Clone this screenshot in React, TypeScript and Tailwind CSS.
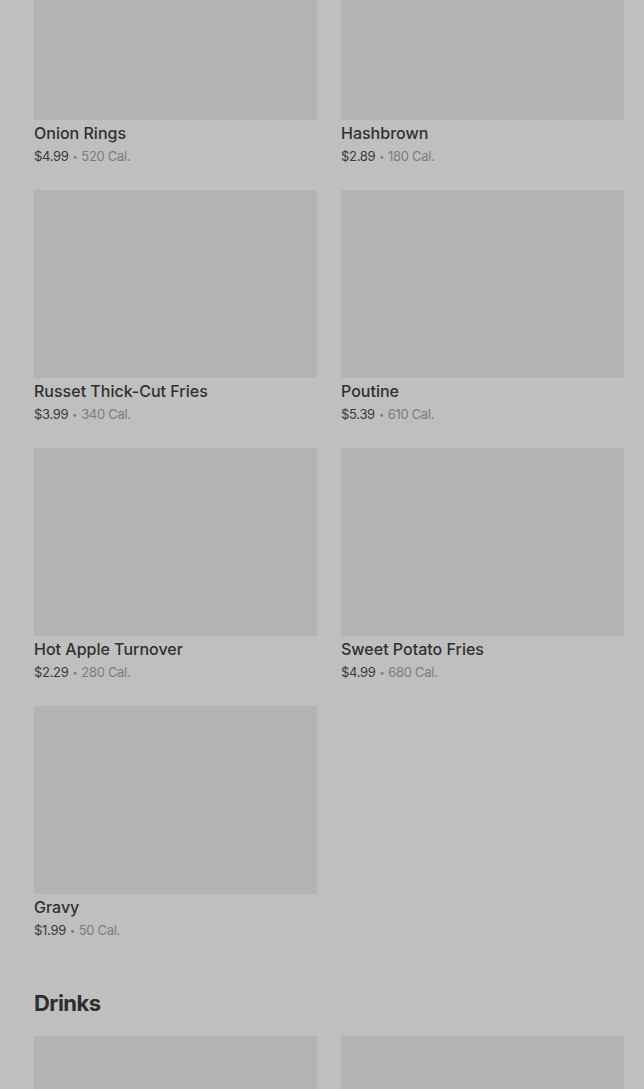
import React from "react";

type Item = { name: string; price: string; cal: string };

const sides: Item[] = [
  { name: "Onion Rings", price: "$4.99", cal: "520 Cal." },
  { name: "Hashbrown", price: "$2.89", cal: "180 Cal." },
  { name: "Russet Thick-Cut Fries", price: "$3.99", cal: "340 Cal." },
  { name: "Poutine", price: "$5.39", cal: "610 Cal." },
  { name: "Hot Apple Turnover", price: "$2.29", cal: "280 Cal." },
  { name: "Sweet Potato Fries", price: "$4.99", cal: "680 Cal." },
  { name: "Gravy", price: "$1.99", cal: "50 Cal." },
];

const MenuCard = ({ item }: { item: Item }) => (
  <div className="flex flex-col">
    <div className="h-[188px] bg-[#b3b3b3]" />
    <p className="pt-px text-[16px] leading-6 font-medium text-[#303030]">{item.name}</p>
    <div className="flex h-[21px] items-center pt-[2px] text-[13px] leading-none tracking-[-0.3px] text-[#3a3a3a]">
      <span>{item.price}</span>
      <span className="mx-[4px] text-[9px] text-[#7c7c7c]">•</span>
      <span className="text-[#7c7c7c]">{item.cal}</span>
    </div>
  </div>
);

const App = () => {
  return (
    <div
      className="min-h-screen overflow-hidden bg-[#bfbfbf] pl-[34px] pr-[20px]"
      style={{ fontFamily: "Inter, 'Noto Sans', sans-serif" }}
    >
      <div className="-mt-[68px] grid grid-cols-2 gap-x-6 gap-y-6">
        {sides.map((item) => (
          <MenuCard key={item.name} item={item} />
        ))}
      </div>

      <h2 className="mt-[49px] mb-[19px] text-[22px] leading-7 font-bold tracking-tight text-[#2e2e2e]">
        Drinks
      </h2>
      <div className="grid grid-cols-2 gap-x-6">
        <div className="h-[188px] bg-[#b3b3b3]" />
        <div className="h-[188px] bg-[#b3b3b3]" />
      </div>
    </div>
  );
};

export default App;
